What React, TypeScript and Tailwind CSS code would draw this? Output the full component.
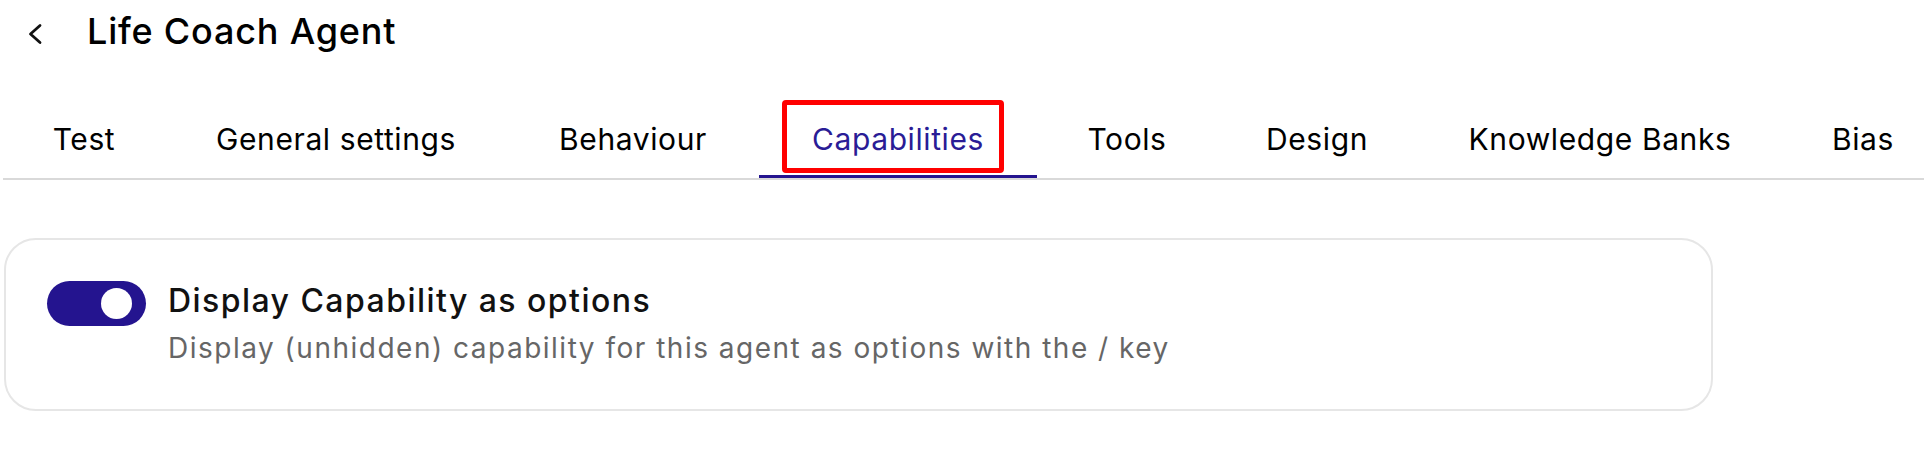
const tabs = [
  { label: "Test", w: "w-[162px]" },
  { label: "General settings", w: "w-[342px]" },
  { label: "Behaviour", w: "w-[252px]" },
  { label: "Capabilities", w: "w-[278px]", active: true },
  { label: "Tools", w: "w-[180px]" },
  { label: "Design", w: "w-[200px]" },
  { label: "Knowledge Banks", w: "w-[366px]" },
  { label: "Bias", w: "w-[160px]" },
];

function BackIcon() {
  return (
    <svg width="16" height="22" viewBox="0 0 16 22" fill="none">
      <polyline points="13,2.5 3.5,11 13,19.5" stroke="#111" strokeWidth="2.8" strokeLinecap="round" strokeLinejoin="round" />
    </svg>
  );
}

export default function App() {
  return (
    <div className="w-[1924px] h-[469px] overflow-hidden bg-white pl-1 font-['Inter',sans-serif] text-black">
      <div className="h-[62px] flex items-center">
        <div className="ml-[23px] flex items-center mt-[6px]">
          <BackIcon />
        </div>
        <h1 className="ml-[44px] text-[36px] leading-none font-medium tracking-[0.8px]">Life Coach Agent</h1>
      </div>

      <div className="mt-[38px] flex flex-row border-b-2 border-[#d9d9d9] -ml-px">
        {tabs.map((t) => (
          <div
            key={t.label}
            className={`relative h-[78px] shrink-0 flex items-center justify-center ${t.w}`}
          >
            <span className={`text-[30px] leading-none tracking-[0.6px] ${t.active ? "text-[#2a1c96]" : "text-black"}`}>
              {t.label}
            </span>
            {t.active && (
              <>
                <div className="absolute left-[23px] right-[33px] top-0 bottom-[5px] border-[5px] border-[#ff0000] rounded-[4px]" />
                <div className="absolute left-0 right-0 bottom-0 h-[3px] bg-[#24148f]" />
              </>
            )}
          </div>
        ))}
      </div>

      <div className="mt-[58px] w-[1709px] h-[173px] rounded-[32px] border-2 border-[#e6e6e6] p-[41px] flex flex-row items-start gap-[22px]">
        <div className="w-[99px] h-[45px] rounded-full bg-[#24148f] flex items-center justify-end pr-[14px] shrink-0">
          <div className="w-[31px] h-[31px] rounded-full bg-white" />
        </div>
        <div className="flex flex-col">
          <p className="text-[32px] leading-[40px] font-medium tracking-[1.45px] text-[#111]">Display Capability as options</p>
          <p className="mt-[9px] text-[28px] leading-[36px] tracking-[1.5px] text-[#666]">
            Display (unhidden) capability for this agent as options with the / key
          </p>
        </div>
      </div>
    </div>
  );
}
